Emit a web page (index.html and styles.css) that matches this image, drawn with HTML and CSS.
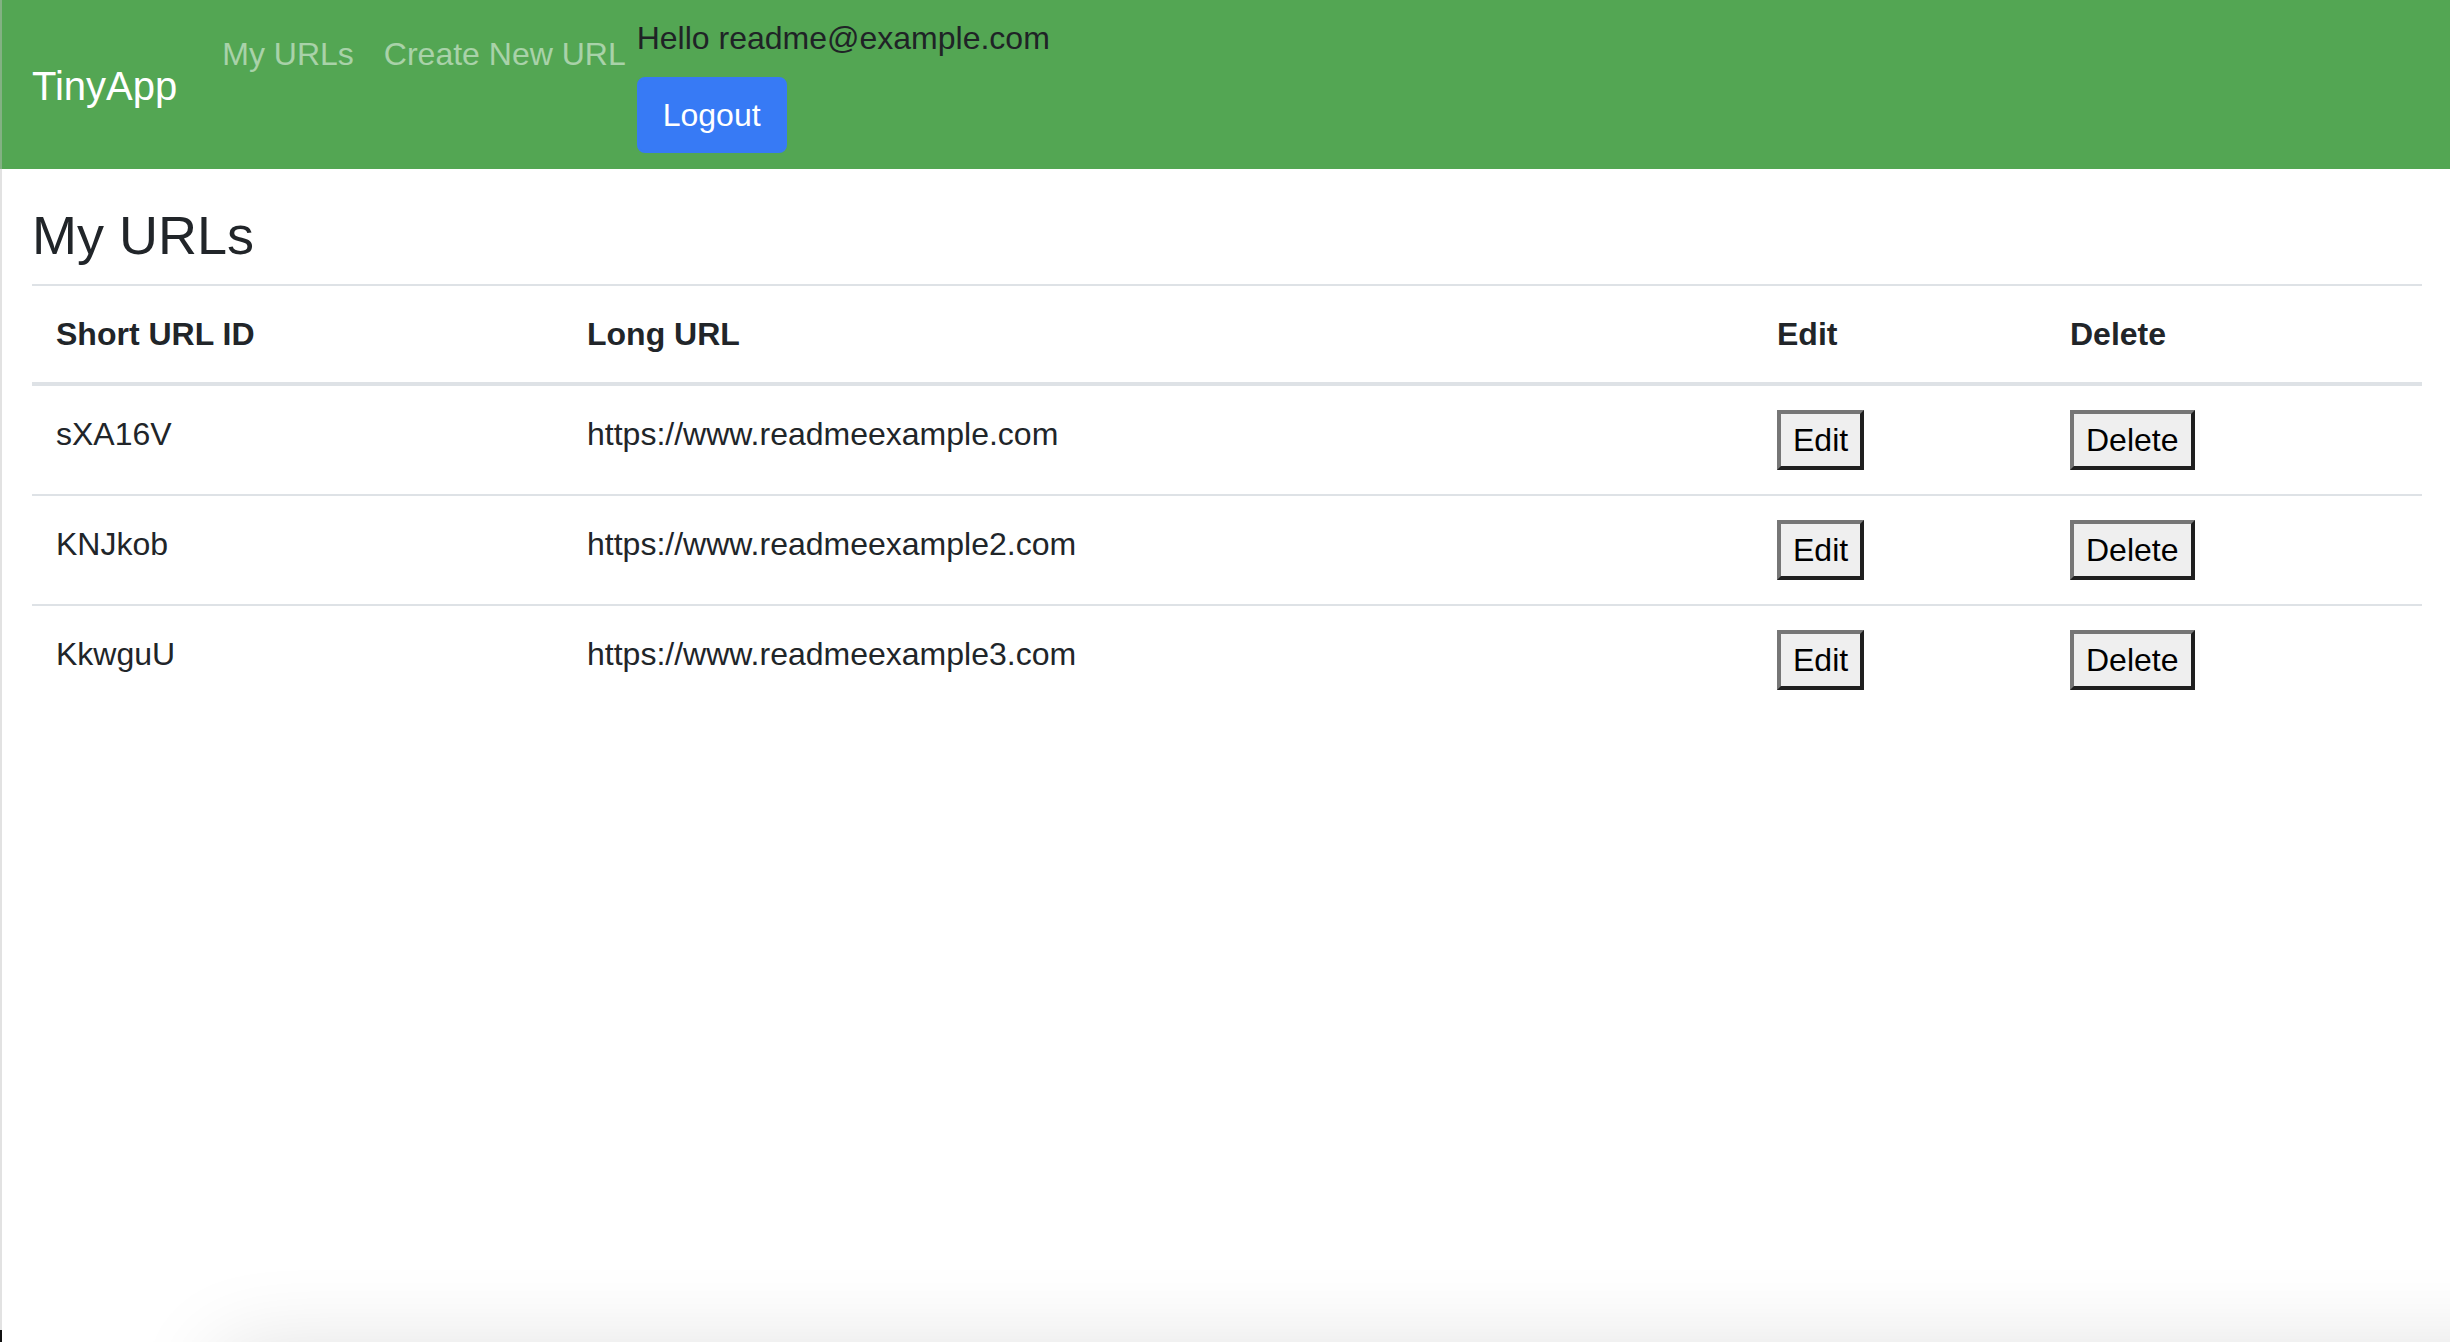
FILE: index.html
```html
<!DOCTYPE html>
<html lang="en">
<head>
<meta charset="utf-8">
<title>TinyApp</title>
<link rel="stylesheet" href="styles.css">
</head>
<body>
  <nav class="navbar">
    <a class="brand" href="#">TinyApp</a>
    <div class="nav-collapse">
      <ul class="nav-list">
        <li><a class="nav-link" href="#">My URLs</a></li>
        <li><a class="nav-link" href="#">Create New URL</a></li>
      </ul>
      <div class="user-block">
        <div class="hello">Hello readme@example.com</div>
        <form class="logout-form">
          <button type="button" class="btn-logout">Logout</button>
        </form>
      </div>
    </div>
  </nav>

  <main class="main">
    <h1 class="title">My URLs</h1>
    <table class="url-table">
      <colgroup>
        <col class="c-id">
        <col class="c-long">
        <col class="c-edit">
        <col class="c-del">
      </colgroup>
      <thead>
        <tr>
          <th>Short URL ID</th>
          <th>Long URL</th>
          <th>Edit</th>
          <th>Delete</th>
        </tr>
      </thead>
      <tbody>
        <tr>
          <td>sXA16V</td>
          <td>https://www.readmeexample.com</td>
          <td><button type="button" class="btn-plain">Edit</button></td>
          <td><button type="button" class="btn-plain">Delete</button></td>
        </tr>
        <tr>
          <td>KNJkob</td>
          <td>https://www.readmeexample2.com</td>
          <td><button type="button" class="btn-plain">Edit</button></td>
          <td><button type="button" class="btn-plain">Delete</button></td>
        </tr>
        <tr>
          <td>KkwguU</td>
          <td>https://www.readmeexample3.com</td>
          <td><button type="button" class="btn-plain">Edit</button></td>
          <td><button type="button" class="btn-plain">Delete</button></td>
        </tr>
      </tbody>
    </table>
  </main>

  <div class="edge-line"></div>
  <div class="window-shadow"></div>
  <div class="corner-mark"></div>
</body>
</html>
```

FILE: styles.css
```css
* { box-sizing: border-box; }

html, body {
  margin: 0;
  padding: 0;
}

body {
  font-family: "Liberation Sans", Arial, sans-serif;
  font-size: 32px;
  line-height: 1.5;
  color: #212529;
  background: #ffffff;
  min-height: 1342px;
}

/* ---------- Navbar ---------- */
.navbar {
  display: flex;
  align-items: flex-start;
  height: 169px;
  padding: 14px 32px 16px 32px;
  background: #53a653;
}

.brand {
  align-self: center;
  margin-top: 5px;
  margin-right: 30px;
  padding: 10px 0;
  font-size: 40px;
  line-height: 60px;
  color: #ffffff;
  text-decoration: none;
  white-space: nowrap;
}

.nav-collapse {
  display: flex;
  align-items: flex-start;
}

.nav-list {
  display: flex;
  list-style: none;
  margin: 0;
  padding: 0;
}

.nav-link {
  display: block;
  padding: 16px 15px;
  line-height: 48px;
  color: rgba(255, 255, 255, 0.5);
  text-decoration: none;
  white-space: nowrap;
}

.user-block {
  display: flex;
  flex-direction: column;
  align-items: flex-start;
  margin-left: -4px;
}

.hello {
  line-height: 48px;
  color: #1f2326;
  white-space: nowrap;
}

.logout-form {
  margin: 15px 0 0 0;
}

.btn-logout {
  display: block;
  font-family: inherit;
  font-size: 32px;
  line-height: 48px;
  padding: 12px 24px;
  border: 2px solid #377af5;
  border-radius: 8px;
  background: #377af5;
  color: #ffffff;
  cursor: pointer;
}

/* ---------- Main ---------- */
.main {
  padding: 33px 28px 0 32px;
}

.title {
  margin: 0 0 15px 0;
  font-size: 54px;
  line-height: 67px;
  font-weight: 500;
  color: #212529;
}

.url-table {
  width: 100%;
  table-layout: fixed;
  border-collapse: separate;
  border-spacing: 0;
  color: #212529;
}

.c-id { width: 531px; }
.c-long { width: 1190px; }
.c-edit { width: 293px; }
.c-del { width: 376px; }

.url-table th {
  text-align: left;
  font-weight: bold;
  padding: 24px;
  line-height: 48px;
  border-top: 2px solid #dee2e6;
  border-bottom: 4px solid #dee2e6;
  vertical-align: bottom;
}

.url-table td {
  padding: 24px;
  line-height: 48px;
  vertical-align: top;
  white-space: nowrap;
}

.url-table tbody tr + tr td {
  border-top: 2px solid #dee2e6;
}

.btn-plain {
  font-family: "Liberation Sans", Arial, sans-serif;
  font-size: 32px;
  line-height: 48px;
  padding: 2px 12px;
  margin: 0;
  border-width: 4px;
  border-style: solid;
  border-color: #767676 #1f1f1f #1f1f1f #767676;
  background: #efefef;
  color: #000000;
  cursor: pointer;
  display: inline-block;
  vertical-align: top;
}

/* ---------- Screenshot artefacts (overlays) ---------- */
.edge-line {
  position: fixed;
  left: 0;
  top: 0;
  width: 2px;
  height: 100%;
  background: rgba(190, 190, 190, 0.45);
}

.window-shadow {
  position: fixed;
  left: 230px;
  right: -300px;
  bottom: -140px;
  height: 120px;
  background: #ffffff;
  box-shadow: 0 0 90px 10px rgba(0, 0, 0, 0.14);
}

.corner-mark {
  position: fixed;
  left: 0;
  bottom: 0;
  width: 2px;
  height: 12px;
  background: #111111;
}
```
